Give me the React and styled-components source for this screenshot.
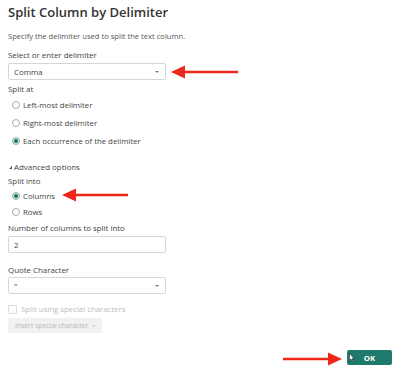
import React from 'react';
import styled, { createGlobalStyle } from 'styled-components';

const GlobalStyle = createGlobalStyle`
  html, body { margin: 0; padding: 0; background: #fff; }
  body { font-family: "Open Sans", "Liberation Sans", sans-serif; color: #444; }
`;

const Dialog = styled.div`
  position: relative;
  width: 395px;
  height: 372px;
  box-sizing: border-box;
  padding: 2px 9px 0 8px;
  display: flex;
  flex-direction: column;
  overflow: hidden;
`;

const Title = styled.h1`
  margin: 0;
  font-size: 13px;
  font-weight: 600;
  color: #333;
  line-height: 20px;
`;

const Intro = styled.p`
  margin: 8px 0 0 0;
  font-size: 7.6px;
  line-height: 12px;
  color: #555;
`;

const Label = styled.div`
  font-size: 7.9px;
  line-height: 11px;
  color: #444;
  margin-top: ${p => p.$top || 0}px;
`;

const Field = styled.div`
  margin-top: ${p => p.$top || 2}px;
  width: 158px;
  height: 17px;
  box-sizing: border-box;
  border: 1px solid #d6d6d6;
  border-radius: 2px;
  display: flex;
  align-items: center;
  justify-content: space-between;
  padding: 0 6px 0 5px;
  font-size: 7.9px;
  color: #444;
  background: #fff;
`;

const Caret = styled.span`
  width: 0;
  height: 0;
  border-left: 2px solid transparent;
  border-right: 2px solid transparent;
  border-top: 2px solid ${p => p.$light ? '#ccc' : '#777'};
`;

const Options = styled.div`
  display: flex;
  flex-direction: column;
  gap: ${p => p.$gap}px;
  margin-top: ${p => p.$top}px;
  padding-left: 4px;
`;

const Option = styled.div`
  display: flex;
  align-items: center;
  gap: 3px;
  font-size: 7.8px;
  line-height: 11px;
  color: #444;
`;

const Radio = styled.span`
  width: 8px;
  height: 8px;
  box-sizing: border-box;
  border-radius: 50%;
  border: 1px solid ${p => (p.$on ? '#7fb3aa' : '#aaa')};
  background: ${p => (p.$on ? '#d9ebe7' : '#fff')};
  display: flex;
  align-items: center;
  justify-content: center;
  &::after {
    content: '';
    display: ${p => (p.$on ? 'block' : 'none')};
    width: 4px;
    height: 4px;
    border-radius: 50%;
    background: #1e6e62;
  }
`;

const Advanced = styled.div`
  margin-top: 15px;
  display: flex;
  align-items: center;
  gap: 2px;
  font-size: 7.9px;
  line-height: 11px;
  color: #444;
`;

const Tri = styled.span`
  width: 0;
  height: 0;
  margin-left: 1px;
  border-left: 3px solid transparent;
  border-bottom: 3px solid #555;
`;

const Check = styled.div`
  margin-top: 9.5px;
  display: flex;
  align-items: center;
  gap: 4px;
  font-size: 7.8px;
  line-height: 11px;
  color: #bbb;
`;

const Box = styled.span`
  width: 7px;
  height: 7px;
  border: 1px solid #ddd;
  border-radius: 1px;
`;

const Disabled = styled.div`
  margin-top: 3.5px;
  width: 94px;
  height: 15px;
  background: #f1f1f1;
  display: flex;
  align-items: center;
  justify-content: space-between;
  padding: 0 6px 0 7px;
  box-sizing: border-box;
  font-size: 7px;
  letter-spacing: -0.1px;
  white-space: nowrap;
  color: #bbb;
`;

const Footer = styled.div`
  margin-top: auto;
  margin-bottom: 7px;
  display: flex;
  justify-content: flex-end;
  margin-right: -6px;
`;

const OkButton = styled.div`
  position: relative;
  width: 45px;
  height: 15px;
  background: #1f7a6c;
  border-radius: 2px;
  color: #fff;
  font-size: 7.8px;
  font-weight: 700;
  display: flex;
  align-items: center;
  justify-content: center;
  box-sizing: border-box;
`;

const Pointer = styled.svg`
  position: absolute;
  left: 2px;
  top: 3px;
`;

const Arrow = styled.svg`
  position: absolute;
  left: ${p => p.$x}px;
  top: ${p => p.$y}px;
`;

function RedArrow({ x, y, w, dir }) {
  const h = 14;
  const m = h / 2;
  const body =
    dir === 'left'
      ? `M${w} ${m - 1.3} L14 ${m - 1.3} L14 ${m - 6.5} L0 ${m} L14 ${m + 6.5} L14 ${m + 1.3} L${w} ${m + 1.3} Z`
      : `M0 ${m - 1.3} L${w - 14} ${m - 1.3} L${w - 14} ${m - 6.5} L${w} ${m} L${w - 14} ${m + 6.5} L${w - 14} ${m + 1.3} L0 ${m + 1.3} Z`;
  return (
    <Arrow $x={x} $y={y - m} width={w} height={h} viewBox={`0 0 ${w} ${h}`}>
      <path d={body} fill="#f0261b" />
    </Arrow>
  );
}

export default function App() {
  return (
    <>
      <GlobalStyle />
      <Dialog>
        <Title>Split Column by Delimiter</Title>
        <Intro>Specify the delimiter used to split the text column.</Intro>

        <Label $top={8}>Select or enter delimiter</Label>
        <Field>
          <span>Comma</span>
          <Caret />
        </Field>

        <Label $top={4}>Split at</Label>
        <Options $top={4.5} $gap={7}>
          <Option><Radio />Left-most delimiter</Option>
          <Option><Radio />Right-most delimiter</Option>
          <Option><Radio $on />Each occurrence of the delimiter</Option>
        </Options>

        <Advanced><Tri />Advanced options</Advanced>
        <Label $top={3}>Split into</Label>
        <Options $top={4} $gap={5}>
          <Option><Radio $on />Columns</Option>
          <Option><Radio />Rows</Option>
        </Options>

        <Label $top={5}>Number of columns to split into</Label>
        <Field $top={2.5}>
          <span>2</span>
        </Field>

        <Label $top={11.5}>Quote Character</Label>
        <Field $top={1.5}>
          <span>"</span>
          <Caret />
        </Field>

        <Check><Box />Split using special characters</Check>
        <Disabled>Insert special character <Caret $light /></Disabled>

        <Footer>
          <OkButton>
            <Pointer width="6" height="9" viewBox="0 0 6 9">
              <path d="M0.5 0.5 L0.5 7.5 L2 6 L3.2 8.5 L4.2 8 L3 5.6 L5.2 5.6 Z" fill="#fff" stroke="#222" strokeWidth="0.6" />
            </Pointer>
            OK
          </OkButton>
        </Footer>

        <RedArrow x={171} y={72} w={67} dir="left" />
        <RedArrow x={62} y={195} w={66} dir="left" />
        <RedArrow x={283} y={359} w={59} dir="right" />
      </Dialog>
    </>
  );
}
